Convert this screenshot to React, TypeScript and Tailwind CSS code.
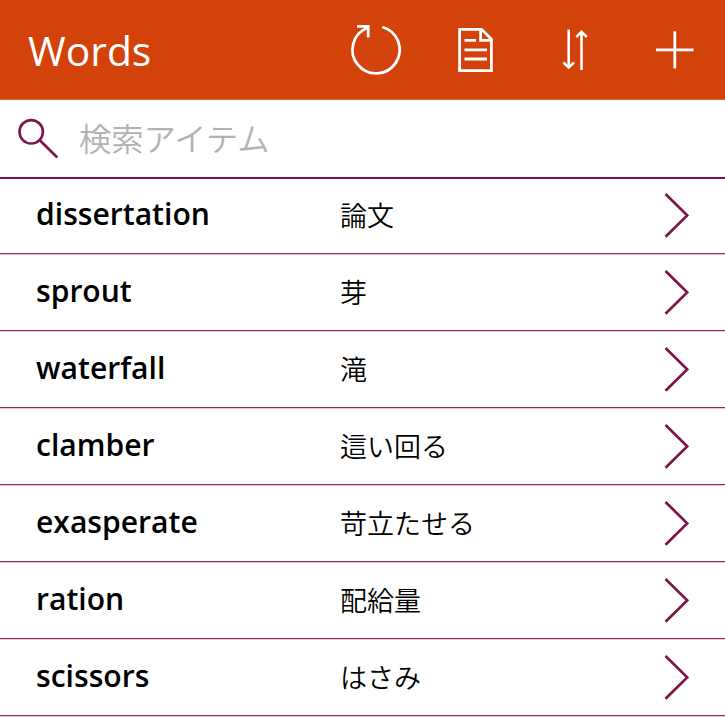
const rows = [
  ["dissertation", "論文"],
  ["sprout", "芽"],
  ["waterfall", "滝"],
  ["clamber", "這い回る"],
  ["exasperate", "苛立たせる"],
  ["ration", "配給量"],
  ["scissors", "はさみ"],
];

function HeaderIcons() {
  return (
    <svg className="ml-auto h-[100px] w-[385px] shrink-0" viewBox="340 0 385 100" fill="none" stroke="white" strokeWidth="2.800">
      <path d="M382.200 27A23.600 23.600 0 1 1 367.500 27.800M357 26.400H368.200V37.500" />
      <path d="M459.600 29.300H481.500L491.400 39.200V70.600H459.600ZM480.600 29.300V40.300H491.400M464.500 40.400H476M464.500 49.800H487M464.500 59H487" />
      <path d="M568.700 29.500V68M563.500 62.500L568.700 67.500L574 62.500M581.500 70V32M576.300 37L581.500 31.900L586.800 37" strokeWidth="2.600" />
      <path d="M656 49.800H693.600M674.800 31.200V68.600" />
    </svg>
  );
}

export default function App() {
  return (
    <main className="flex h-[725px] w-[725px] flex-col overflow-hidden bg-white font-['Open_Sans','Noto_Sans_CJK_JP',sans-serif] text-black">
      <header className="flex h-[100px] shrink-0 items-center border-b border-[#dc683b] bg-[#d3420a] pl-7 text-white">
        <h1 className="text-[40.800px] leading-[54px]">Words</h1>
        <HeaderIcons />
      </header>
      <div className="flex h-[79px] shrink-0 items-center border-b-2 border-[#80134c] pl-[17px] text-[32.300px] text-[#b2b2b2]">
        <svg className="h-[42px] w-[42px]" viewBox="0 0 42 42" fill="none" stroke="#80134c" strokeWidth="2.600"><circle cx="14.200" cy="13.800" r="11.700" /><path d="M22.500 22L40.300 39.500" /></svg>
        <span className="ml-5 font-[350]">検索アイテム</span>
      </div>
      <div className="-mt-0.5 shrink-0">
        {rows.map(([word, meaning]) => (
          <div key={word} className="flex h-[77px] items-center border-b border-[#8e2c5f] shadow-[0_1px_0_#e3c6d4]">
            <span className="w-[340px] pb-0.5 pl-9 text-[30.100px] font-semibold">{word}</span>
            <span className="pt-0.5 text-[27px] font-[350]">{meaning}</span>
            <svg className="mr-9 ml-auto h-[46px] w-[26px]" viewBox="0 0 26 46" fill="none" stroke="#80134c" strokeWidth="2.700"><path d="M2.500 2L24.200 23.400L2.500 44.800" /></svg>
          </div>
        ))}
      </div>
    </main>
  );
}
